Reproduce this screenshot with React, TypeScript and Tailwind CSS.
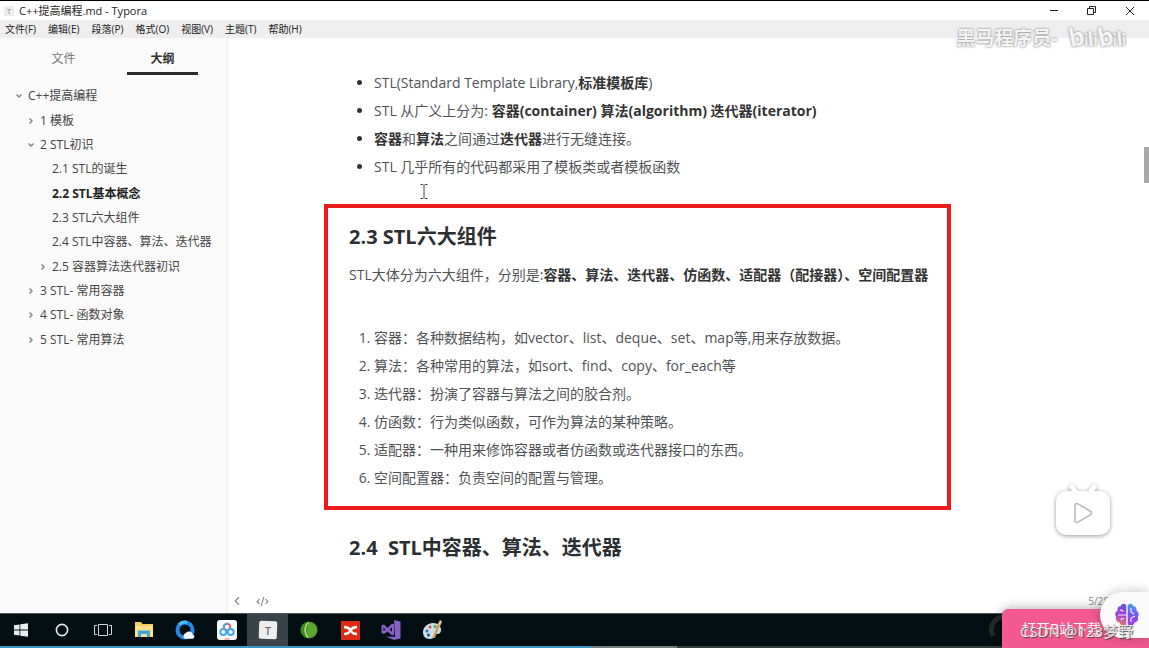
import type { ReactNode } from 'react';
import { ChevronDown, ChevronLeft, ChevronRight, CodeXml } from 'lucide-react';

const menus = ['文件(F)', '编辑(E)', '段落(P)', '格式(O)', '视图(V)', '主题(T)', '帮助(H)'];

type Node = { label: string; level: 0 | 1 | 2; state?: 'open' | 'closed'; active?: boolean };

const outline: Node[] = [
  { label: 'C++提高编程', level: 0, state: 'open' },
  { label: '1 模板', level: 1, state: 'closed' },
  { label: '2 STL初识', level: 1, state: 'open' },
  { label: '2.1 STL的诞生', level: 2 },
  { label: '2.2 STL基本概念', level: 2, active: true },
  { label: '2.3 STL六大组件', level: 2 },
  { label: '2.4 STL中容器、算法、迭代器', level: 2 },
  { label: '2.5 容器算法迭代器初识', level: 2, state: 'closed' },
  { label: '3 STL- 常用容器', level: 1, state: 'closed' },
  { label: '4 STL- 函数对象', level: 1, state: 'closed' },
  { label: '5 STL- 常用算法', level: 1, state: 'closed' },
];

const indent = { 0: 'pl-3', 1: 'pl-6', 2: 'pl-9' };

const components = [
  '容器：各种数据结构，如vector、list、deque、set、map等,用来存放数据。',
  '算法：各种常用的算法，如sort、find、copy、for_each等',
  '迭代器：扮演了容器与算法之间的胶合剂。',
  '仿函数：行为类似函数，可作为算法的某种策略。',
  '适配器：一种用来修饰容器或者仿函数或迭代器接口的东西。',
  '空间配置器：负责空间的配置与管理。',
];

function TitleBar() {
  return (
    <header className="flex h-5 items-center border-t border-black bg-white pl-1">
      <span className="flex size-[10px] items-center justify-center bg-[#eeeeee] text-[8px] leading-none text-[#888]">T</span>
      <h1 className="ml-[5px] text-[11px] leading-4 text-[#222]">C++提高编程.md - Typora</h1>
      <div className="ml-auto flex h-full items-center text-[#222]">
        <button aria-label="最小化" className="flex w-[38px] justify-center">
          <svg width="10" height="10" viewBox="0 0 10 10" stroke="currentColor" fill="none"><path d="M1 4.500h8" /></svg>
        </button>
        <button aria-label="还原" className="flex w-[38px] justify-center">
          <svg width="10" height="10" viewBox="0 0 10 10" stroke="currentColor" fill="none"><path d="M.5 2.500h6v6h-6zM2.500 2.500v-2h6v6h-2" /></svg>
        </button>
        <button aria-label="关闭" className="flex w-[38px] justify-center">
          <svg width="10" height="10" viewBox="0 0 10 10" stroke="currentColor" fill="none"><path d="M.8.8l8.400 8.400M9.200.8L.8 9.200" /></svg>
        </button>
      </div>
    </header>
  );
}

function Sidebar() {
  return (
    <aside className="w-[228px] shrink-0 border-r border-[#eeeeee] bg-[#fafafa] text-[12px] text-[#444]">
      <div className="flex gap-7 pl-7 pt-[10px]">
        <button className="h-[27px] w-[71px] border-b-[3px] border-transparent pb-[2px] text-[#777]">文件</button>
        <button className="h-[27px] w-[71px] border-b-[3px] border-[#2a2a2a] pb-[2px] font-bold text-[#333]">大纲</button>
      </div>
      <ul className="mt-[9px] grid h-[268px] auto-rows-fr">
        {outline.map((n) => (
          <li key={n.label} className={`flex items-center ${indent[n.level]}`}>
            <span className="flex w-4 shrink-0 items-center pl-[3px] text-[#888]">
              {n.state === 'open' && <ChevronDown size={8} strokeWidth={5} />}
              {n.state === 'closed' && <ChevronRight size={8} strokeWidth={5} />}
            </span>
            <a href="#outline" className={n.active ? 'whitespace-nowrap font-bold text-[#222]' : 'whitespace-nowrap'}>{n.label}</a>
          </li>
        ))}
      </ul>
    </aside>
  );
}

function Article() {
  return (
    <main className="flex min-w-0 flex-1 flex-col bg-white text-[14px] leading-7 text-[#505356]">
      <ul className="ml-[146px] mt-[31px] list-disc marker:text-[#333] [&_b]:text-[#333]">
        <li>STL(Standard Template Library,<b>标准模板库</b>)</li>
        <li>STL 从广义上分为: <b>容器(container) 算法(algorithm) 迭代器(iterator)</b></li>
        <li><b>容器</b>和<b>算法</b>之间通过<b>迭代器</b>进行无缝连接。</li>
        <li>STL 几乎所有的代码都采用了模板类或者模板函数</li>
      </ul>
      <section className="ml-24 mr-[198px] mt-[23px] border-4 border-[#e91b1d] px-[21px] pb-[14px] pt-[15px]">
        <h2 className="text-[20px] font-bold leading-7 text-[#2c2f31]">2.3 STL六大组件</h2>
        <p className="mt-[10px] whitespace-nowrap">STL大体分为六大组件，分别是:<b className="text-[#333]">容器、算法、迭代器、仿函数、适配器（配接器）、空间配置器</b></p>
        <ol className="mt-[35px] list-decimal pl-[25px]">
          {components.map((c) => <li key={c}>{c}</li>)}
        </ol>
      </section>
      <h2 className="ml-[121px] mt-6 whitespace-pre text-[20px] font-bold leading-7 text-[#2c2f31]">2.4  STL中容器、算法、迭代器</h2>
      <footer className="mt-auto flex h-6 items-center gap-3 pl-[2px] text-[#888]">
        <button aria-label="收起侧栏"><ChevronLeft size={14} strokeWidth={2} /></button>
        <button aria-label="源代码模式"><CodeXml size={13} strokeWidth={2} /></button>
        <span className="ml-auto pr-10 text-[10px]">5/28</span>
      </footer>
    </main>
  );
}

const apps: { name: string; icon: ReactNode }[] = [
  { name: '开始', icon: <svg width="16" height="16" viewBox="0 0 16 16" fill="#e8eef0"><path d="M1 3.200l5.500-.8v5.200H1zM7.300 2.300L15 1.200v6.400H7.300zM1 8.400h5.500v5.200L1 12.800zM7.300 8.400H15v6.400l-7.700-1.100z" /></svg> },
  { name: 'Cortana', icon: <svg width="14" height="14" viewBox="0 0 14 14"><circle cx="7" cy="7" r="5.600" fill="none" stroke="#e8eef0" strokeWidth="1.600" /></svg> },
  { name: '任务视图', icon: <svg width="18" height="14" viewBox="0 0 18 14" fill="none" stroke="#cfd6d8"><path d="M4.500 1.500h9v11h-9zM3 2.500H.5v9H3M15 2.500h2.500v9H15" /></svg> },
  { name: '文件资源管理器', icon: <svg width="20" height="18" viewBox="0 0 20 18"><path d="M1 1h6l1.500 2H19v13H1z" fill="#f3cf63" /><path d="M1 5h18v11H1z" fill="#fbe08a" /><path d="M4 16V9.500h12V16h-3v-3H7v3z" fill="#41a9d8" /></svg> },
  { name: 'QQ浏览器', icon: <svg width="20" height="20" viewBox="0 0 20 20"><circle cx="10" cy="10" r="7.500" fill="none" stroke="#2289ea" strokeWidth="4" /><path d="M4 4.500a8 8 0 0 1 8-2.200" stroke="#48c0f5" strokeWidth="3" fill="none" /><path d="M10 18.800a3 3 0 0 1 .5-5.500 4 4 0 0 1 7.300 1.200 2.300 2.300 0 0 1 .2 4.300z" fill="#f5faff" /></svg> },
  { name: '百度网盘', icon: <svg width="20" height="20" viewBox="0 0 20 20" fill="none" strokeWidth="2"><rect width="20" height="20" rx="3" fill="#fafafa" /><circle cx="10" cy="7" r="3.200" stroke="#eb5e6b" /><path d="M6.800 7a3.200 3.200 0 0 1 3.200-3.200" stroke="#3daaf0" /><circle cx="6.300" cy="12" r="3" stroke="#3daaf0" /><circle cx="13.700" cy="12" r="3" stroke="#3daaf0" /><path d="M7.500 19h5" stroke="#eb5e6b" strokeWidth="1" /></svg> },
  { name: 'Typora', icon: <span className="flex size-[18px] rotate-2 items-center justify-center rounded-[2px] bg-[#eeeeee] text-[11px] leading-none text-[#444]">T</span> },
  { name: 'Camtasia', icon: <svg width="18" height="18" viewBox="0 0 18 18"><circle cx="9" cy="9" r="8.600" fill="#3f8a24" /><path d="M10 1.500c5 .5 7 4 7 7.500s-3 7-7 7.500c-4-4-4-11 0-15z" fill="#5aa82f" /><path d="M8.500 1.500c-4.500 4-4.500 11 0 15" fill="none" stroke="#b5dc88" strokeWidth="1.600" /></svg> },
  { name: 'XMind', icon: <svg width="19" height="19" viewBox="0 0 19 19"><rect width="19" height="19" rx="1" fill="#dd2c16" /><path d="M3 6c4 0 5 1 6.500 3C11 7 12 6 16 6M3 13c4 0 5-1.500 6.500-4 1.500 2.500 2.500 4 6.500 4" fill="none" stroke="#fff" strokeWidth="2.400" /></svg> },
  { name: 'Visual Studio', icon: <svg width="20" height="20" viewBox="0 0 20 20" fill="#8661c5"><path d="M13 0l6.500 1.500v17L13 20 5 16.500l9 .2z" /><path fillRule="evenodd" d="M.5 5.500L3 4.500 6.500 8 11 3.500l2 1v10l-2 1L6.500 11.500 3 14l-2.500-1zM2.500 7.500v3.500L4.500 9.400zM8.500 9.500l2.500 2.300V7.200z" /></svg> },
  { name: '画图', icon: <svg width="20" height="20" viewBox="0 0 20 20"><path d="M1 12C1 7 6 3 11 3s8 3 8 7-3 4-5 4-1 5-6 5-7-3-7-7z" fill="#c8e0ec" /><circle cx="5" cy="11" r="1.500" fill="#3b6fb5" /><circle cx="8" cy="7" r="1.500" fill="#d94a3e" /><circle cx="13" cy="6.500" r="1.500" fill="#5ca845" /><circle cx="6.500" cy="15" r="1.500" fill="#1b4a7d" /><path d="M10.500 18L16 4l2 .8L13 18z" fill="#d89440" /><path d="M15.500 4.500L18 0l2 1.500-1.500 4z" fill="#e8c48a" /></svg> },
];

function Taskbar() {
  return (
    <nav className="relative flex h-[35px] flex-col justify-between border-t border-[#555] bg-[#030e13]">
      <div className="flex h-8 w-[453px]">
        {apps.map((a) => (
          <button key={a.name} aria-label={a.name} className={`flex flex-1 items-center justify-center ${a.name === 'Typora' ? 'bg-[#39434a]' : ''}`}>
            {a.icon}
          </button>
        ))}
      </div>
      <svg className="absolute right-[144px] top-0" width="18" height="26" viewBox="0 0 18 26" fill="none"><path d="M16 3C6 4 2 14 6 22" stroke="#25292b" strokeWidth="5" /></svg>
      <div className="flex h-[2px] bg-[#393c3e]">
        <div className="w-[51.400%] bg-[#3a97c2]" />
        <div className="w-[7.500%] bg-[#777b7d]" />
      </div>
    </nav>
  );
}

function BrainIcon() {
  return (
    <svg width="26" height="26" viewBox="0 0 26 26" fill="none">
      <defs>
        <linearGradient id="lobeLeft" x1="10" y1="1" x2="5" y2="25" gradientUnits="userSpaceOnUse"><stop stopColor="#5b57e8" /><stop offset=".5" stopColor="#a33fd6" /><stop offset="1" stopColor="#f08a4b" /></linearGradient>
        <linearGradient id="lobeRight" x1="20" y1="1" x2="16" y2="25" gradientUnits="userSpaceOnUse"><stop stopColor="#42a5f0" /><stop offset=".55" stopColor="#7d4df0" /><stop offset="1" stopColor="#b13ce0" /></linearGradient>
      </defs>
      <path d="M12.300 3.500C11 1 7.500 1.300 6.800 4 4 4.300 3 6.500 3.600 8.500 1 10 .7 13 2.200 14.800 1.200 18 3 20.500 5.500 20.500 6.500 24 10.500 25 12.300 22.300z" fill="url(#lobeLeft)" />
      <path d="M13.700 3.500C15 1 18.500 1.300 19.200 4 22 4.300 23 6.500 22.400 8.500 25 10 25.300 13 23.800 14.800 24.800 18 23 20.500 20.500 20.500 19.500 24 15.500 25 13.700 22.300z" fill="url(#lobeRight)" />
      <path d="M4 13h8M6 8.500c1.500-1 3 0 3 1.500M7 18c0-1.500 2-2 3-1M17 6v4l3 2M17 20v-4l4-2" stroke="#f6efff" strokeWidth="1.100" />
    </svg>
  );
}

function LogoHalf() {
  return (
    <span className="flex items-baseline">
      <span className="-rotate-12 text-[26px]">b</span>
      <span className="text-[16px]">i</span>
      <span className="-rotate-6 text-[20px]">l</span>
      <span className="text-[16px]">i</span>
    </span>
  );
}

function Overlays() {
  return (
    <>
      <div className="absolute right-[23px] top-[22px] flex items-center gap-3 font-bold text-[#f4f4f4] [text-shadow:0_0_2px_#888,0_0_3px_#bbb]">
        <span className="text-[19px] leading-7">黑马程序员-</span>
        <span className="flex font-[Lato] font-black leading-7"><LogoHalf /><LogoHalf /></span>
      </div>
      <svg className="absolute left-[420px] top-[184px]" width="8" height="15" viewBox="0 0 8 15" fill="none" stroke="#444"><path d="M.5.500h2.500l1 1 1-1h2.500M4 1.500v12M.5 14.500h2.500l1-1 1 1h2.500" /></svg>
      <div className="absolute right-0 top-[147px] h-9 w-[5px] bg-[#a9a9a9]" />
      <button aria-label="播放" className="absolute bottom-[108px] right-[34px] drop-shadow-[0_1px_2px_rgba(0,0,0,0.4)]">
        <svg width="64" height="58" viewBox="0 0 64 58" fill="none">
          <path d="M21 5l5 7M43 5l-5 7" stroke="#fff" strokeWidth="5" strokeLinecap="round" />
          <rect x="5" y="9" width="54" height="44" rx="10" fill="#fff" />
          <path d="M24 23.500v15c0 1.800 1.400 2.500 2.900 1.600l12.500-7.400c1.500-.9 1.500-2.500 0-3.400l-12.500-7.400c-1.500-.9-2.900-.2-2.900 1.600z" fill="#fff" stroke="#bbb" strokeWidth="1.600" />
        </svg>
      </button>
      <button className="absolute bottom-0 right-0 h-[39px] w-[147px] overflow-hidden rounded-tl-md bg-[#f4598f] pl-5 text-left text-[14px] text-white shadow-[0_0_12px_rgba(0,0,0,0.35)]">打开B站下载</button>
      <button aria-label="助手" className="absolute bottom-[10px] right-0 flex h-[46px] w-[49px] items-center rounded-l-full bg-[#fafafa] pl-[14px] shadow-[0_0_12px_rgba(0,0,0,0.25)]"><BrainIcon /></button>
      <span className="absolute bottom-[5px] right-4 whitespace-nowrap text-[15px] leading-6 text-[#e6e6e6] [text-shadow:1px_1px_1px_#444]">CSDN @123梦野</span>
    </>
  );
}

export default function App() {
  return (
    <div className="relative flex min-h-screen flex-col overflow-hidden bg-white font-['Open_Sans','Noto_Sans_CJK_SC',sans-serif]">
      <TitleBar />
      <nav className="flex h-[18px] items-center gap-3 bg-[#eeeeee] pl-[5px] text-[10px] text-[#222]">
        {menus.map((m) => <button key={m}>{m}</button>)}
      </nav>
      <div className="flex flex-1">
        <Sidebar />
        <Article />
      </div>
      <Taskbar />
      <Overlays />
    </div>
  );
}
